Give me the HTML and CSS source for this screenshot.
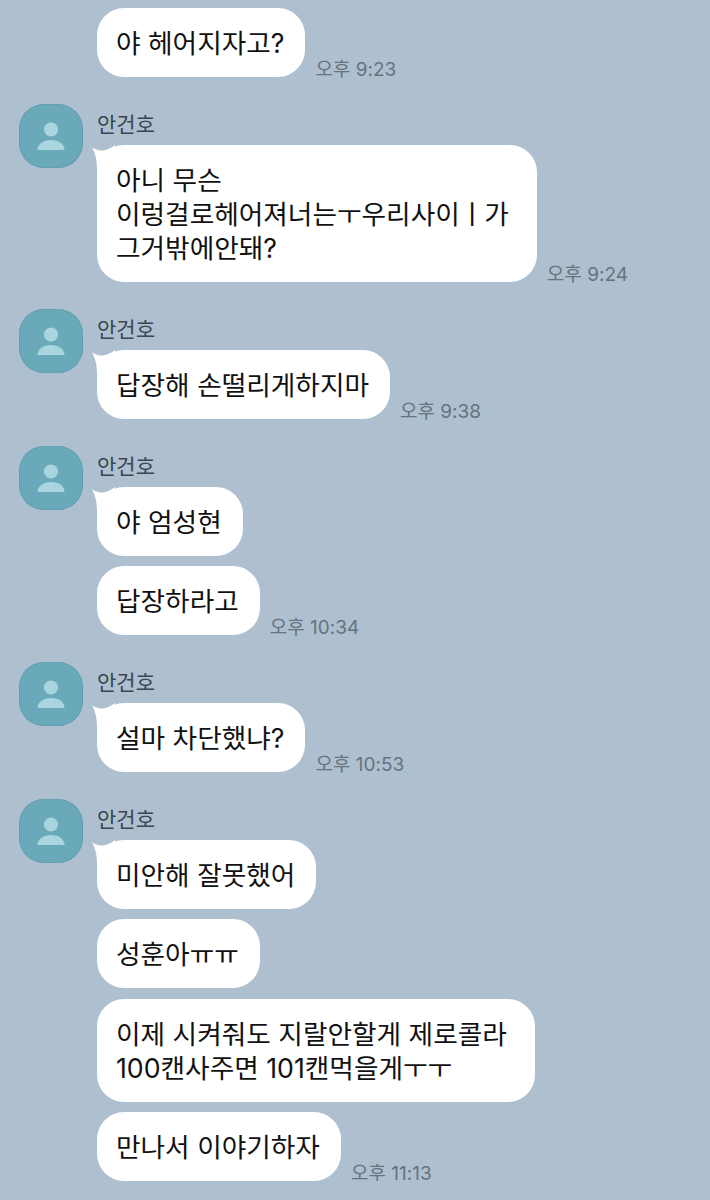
FILE: index.html
```html
<!DOCTYPE html>
<html lang="ko">
<head>
    <meta charset="UTF-8">
    <meta name="viewport" content="width=device-width, initial-scale=1.0">
    <title>대화</title>
    <link rel="stylesheet" href="styles.css">
</head>
<body>
    <div class="chat">
        <div class="group">
            <div class="avatarSlot"></div>
            <div class="msgs">
                <div class="row"><div class="bubble">야 헤어지자고?</div><span class="time">오후 9:23</span></div>
            </div>
        </div>

        <div class="group">
            <div class="avatar"><svg viewBox="0 0 64 64"><circle cx="32" cy="25.5" r="7"/><path d="M18.5 46c0-6 6-10 13.5-10s13.5 4 13.5 10z"/></svg></div>
            <div class="msgs">
                <div class="name">안건호</div>
                <div class="row"><div class="bubble first wide"><svg class="tail" viewBox="0 0 24 24"><path d="M1 2C4 5 13 9 24 0V24H6C6 14 4 8 1 2z"/></svg>아니 무슨<br>이렁걸로헤어져너는ㅜ우리사이ㅣ가<br>그거밖에안돼?</div><span class="time">오후 9:24</span></div>
            </div>
        </div>

        <div class="group">
            <div class="avatar"><svg viewBox="0 0 64 64"><circle cx="32" cy="25.5" r="7"/><path d="M18.5 46c0-6 6-10 13.5-10s13.5 4 13.5 10z"/></svg></div>
            <div class="msgs">
                <div class="name">안건호</div>
                <div class="row"><div class="bubble first"><svg class="tail" viewBox="0 0 24 24"><path d="M1 2C4 5 13 9 24 0V24H6C6 14 4 8 1 2z"/></svg>답장해 손떨리게하지마</div><span class="time">오후 9:38</span></div>
            </div>
        </div>

        <div class="group">
            <div class="avatar"><svg viewBox="0 0 64 64"><circle cx="32" cy="25.5" r="7"/><path d="M18.5 46c0-6 6-10 13.5-10s13.5 4 13.5 10z"/></svg></div>
            <div class="msgs">
                <div class="name">안건호</div>
                <div class="row"><div class="bubble first"><svg class="tail" viewBox="0 0 24 24"><path d="M1 2C4 5 13 9 24 0V24H6C6 14 4 8 1 2z"/></svg>야 엄성현</div></div>
                <div class="row"><div class="bubble">답장하라고</div><span class="time">오후 10:34</span></div>
            </div>
        </div>

        <div class="group">
            <div class="avatar"><svg viewBox="0 0 64 64"><circle cx="32" cy="25.5" r="7"/><path d="M18.5 46c0-6 6-10 13.5-10s13.5 4 13.5 10z"/></svg></div>
            <div class="msgs">
                <div class="name">안건호</div>
                <div class="row"><div class="bubble first"><svg class="tail" viewBox="0 0 24 24"><path d="M1 2C4 5 13 9 24 0V24H6C6 14 4 8 1 2z"/></svg>설마 차단했냐?</div><span class="time">오후 10:53</span></div>
            </div>
        </div>

        <div class="group">
            <div class="avatar"><svg viewBox="0 0 64 64"><circle cx="32" cy="25.5" r="7"/><path d="M18.5 46c0-6 6-10 13.5-10s13.5 4 13.5 10z"/></svg></div>
            <div class="msgs">
                <div class="name">안건호</div>
                <div class="row"><div class="bubble first"><svg class="tail" viewBox="0 0 24 24"><path d="M1 2C4 5 13 9 24 0V24H6C6 14 4 8 1 2z"/></svg>미안해 잘못했어</div></div>
                <div class="row"><div class="bubble">성훈아ㅠㅠ</div></div>
                <div class="row spaced"><div class="bubble wide">이제 시켜줘도 지랄안할게 제로콜라<br>100캔사주면 101캔먹을게ㅜㅜ</div></div>
                <div class="row"><div class="bubble">만나서 이야기하자</div><span class="time">오후 11:13</span></div>
            </div>
        </div>
    </div>
</body>
</html>
```
FILE: styles.css
```css
*{
    padding: 0;
    margin: 0;
    box-sizing: border-box;
}
body{
    background-color: #aec0d0;
    font-family: "Inter", "Noto Sans CJK KR", sans-serif;
}
.chat{
    display: flex;
    flex-direction: column;
    gap: 27px;
    padding: 8px 0 0 19px;
}
.group{
    display: flex;
    gap: 14px;
}
.avatarSlot{
    width: 64px;
}
.avatar{
    width: 64px;
    height: 64px;
    border-radius: 25px;
    background-color: #6aa9ba;
    box-shadow: inset 0 0 0 1px #659fb0;
    flex-shrink: 0;
}
.avatar svg{
    display: block;
    width: 64px;
    height: 64px;
    fill: #a9d6de;
}
.msgs{
    display: flex;
    flex-direction: column;
    gap: 10px;
}
.name{
    height: 31px;
    line-height: 41px;
    font-size: 21px;
    color: #3b4650;
}
.row{
    display: flex;
    align-items: flex-end;
    gap: 10px;
}
.spaced{
    margin-top: 1px;
}
.bubble{
    position: relative;
    padding: 17.5px 21px 17.5px 19px;
    font-size: 26.7px;
    line-height: 34px;
    color: #111;
    background-color: #fff;
    border-radius: 27px;
    white-space: nowrap;
}
.wide{
    padding-right: 28px;
}
.tail{
    position: absolute;
    left: -6px;
    top: 0;
    width: 24px;
    height: 24px;
    fill: #fff;
}
.time{
    font-size: 19px;
    line-height: 14px;
    color: #66727e;
    white-space: nowrap;
}
```
